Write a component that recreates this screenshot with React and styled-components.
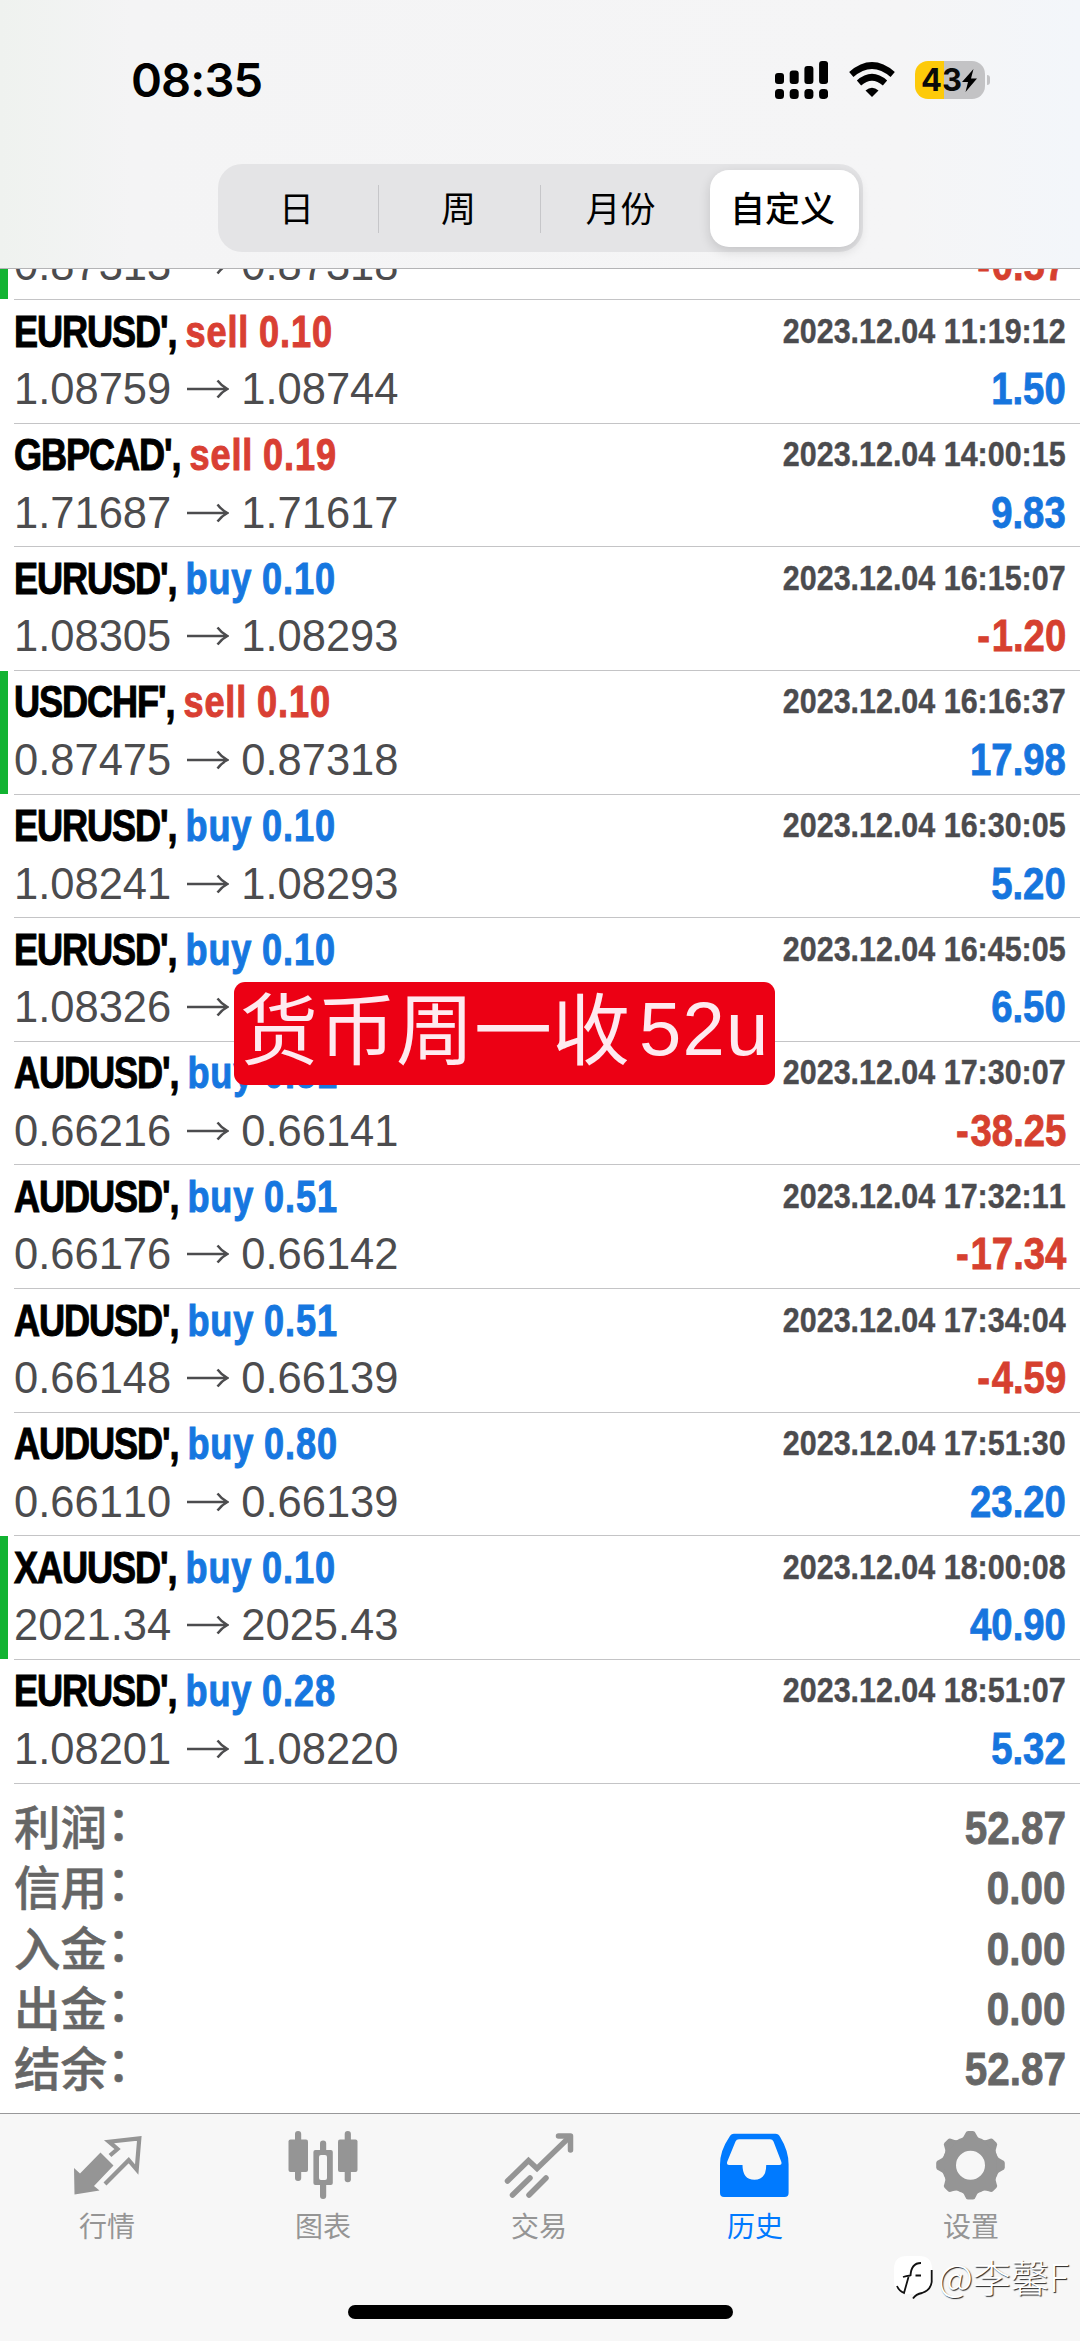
import React from 'react';
import styled, { createGlobalStyle } from 'styled-components';

const sans = '"Liberation Sans", "Noto Sans CJK SC", sans-serif';
const cjk = '"Noto Sans CJK SC", sans-serif';

const GlobalStyle = createGlobalStyle`
  * {
    box-sizing: border-box;
  }

  body {
    margin: 0;
    background: #fff;
    font-family: ${sans};
    font-kerning: none;
  }
`;

const Screen = styled.div`
  position: relative;
  display: flex;
  flex-direction: column;
  width: 1080px;
  height: 2341px;
  overflow: hidden;
  background: #fff;
`;

const Header = styled.header`
  flex: none;
  height: 269px;
  border-bottom: 1px solid #b4b4b6;
  background: linear-gradient(90deg, #eff2ef 0, #f4f4f5 130px, #f5f5f6 900px, #f3f6fa 100%);
`;

const StatusBar = styled.div`
  display: flex;
  justify-content: space-between;
  align-items: center;
  height: 164px;
  padding: 0 90px 4px 131px;
`;

const Clock = styled.span`
  font: 600 47px/50px Inter, sans-serif;
  letter-spacing: -0.9px;
  color: #000;
`;

const StatusIcons = styled.div`
  display: flex;
  align-items: center;
`;

const Signal = styled.svg`
  width: 53px;
  height: 38px;
  margin-right: 21px;
`;

const Wifi = styled.svg`
  width: 46px;
  height: 36px;
  margin-right: 20px;
`;

const Battery = styled.div`
  display: flex;
  align-items: center;
  justify-content: center;
  width: 70px;
  height: 38px;
  padding-right: 2px;
  border-radius: 13px;
  background: linear-gradient(90deg, #fdca0a 42%, #c3c3c5 42%);
  font: 700 31px/38px Inter, sans-serif;
  color: #0a0a0a;
`;

const Bolt = styled.svg`
  width: 15px;
  height: 23px;
`;

const BatteryCap = styled.i`
  width: 3px;
  height: 10px;
  margin-left: 2px;
  border-radius: 0 3px 3px 0;
  background: #c3c3c5;
`;

const Segments = styled.div`
  display: flex;
  width: 645px;
  height: 88px;
  margin: 0 auto;
  border-radius: 24px;
  background: #e4e4e6;
`;

const Segment = styled.button`
  display: flex;
  align-items: center;
  justify-content: center;
  flex: none;
  width: ${props => (props.$active ? 149 : 161)}px;
  margin: ${props => (props.$active ? '6px 4px 5px 7px' : '0')};
  padding: 0 3px 3px 0;
  border: 0;
  border-radius: 19px;
  background: ${props => (props.$active ? '#fff' : 'none')};
  box-shadow: ${props => (props.$active ? '0 4px 12px rgba(0, 0, 0, 0.14)' : 'none')};
  font: ${props => (props.$active ? 500 : 400)} 35px/50px ${cjk};
  white-space: nowrap;
  color: #000;
`;

const Divider = styled.i`
  width: 1px;
  height: 48px;
  margin: 21px 1px 0 -1px;
  background: #c6c6c9;
`;

const List = styled.main`
  display: flex;
  flex-direction: column;
  justify-content: flex-end;
  flex: none;
  height: 1514.5px;
  overflow: hidden;
`;

const Row = styled.div`
  position: relative;
  flex: none;
  display: grid;
  grid-template-columns: 1fr auto;
  grid-template-rows: 60px 1fr;
  height: 123.63px;
  padding: 0 14px;

  &::before {
    content: '';
    position: absolute;
    top: 0;
    bottom: 1px;
    left: 0;
    width: 8px;
    background: ${props => (props.$marked ? '#12b332' : 'none')};
  }

  &::after {
    content: '';
    position: absolute;
    right: 0;
    bottom: 0;
    left: 14px;
    height: 1px;
    background: #c4c4c6;
  }
`;

const Title = styled.div`
  justify-self: start;
  height: 50px;
  margin-top: 6.5px;
  font-size: 43.5px;
  line-height: 50px;
  font-weight: 700;
  white-space: nowrap;
  transform: scaleX(0.83);
  transform-origin: left;
  -webkit-text-stroke: 1px;
`;

const Ticker = styled.span`
  letter-spacing: -1.3px;
  color: #000;
`;

const Action = styled.span`
  letter-spacing: 1.1px;
  word-spacing: -1.5px;
  color: ${props => (props.$side === 'sell' ? '#d93f33' : '#1677e0')};
`;

const Time = styled.div`
  justify-self: end;
  height: 42px;
  margin-top: 9.5px;
  font-size: 35.5px;
  line-height: 42px;
  font-weight: 700;
  color: #4b4b4e;
  transform: scaleX(0.858);
  transform-origin: right;
  -webkit-text-stroke: 0.4px;
`;

const Prices = styled.div`
  grid-row: 2;
  display: flex;
  align-items: center;
  height: 50px;
  margin-top: 4px;
  font-size: 43.5px;
  line-height: 50px;
  color: #4c4c4e;
`;

const Arrow = styled.svg`
  width: 43px;
  height: 20px;
  margin: 0 12px 0 15px;
`;

const Amount = styled.div`
  grid-row: 2;
  justify-self: end;
  height: 50px;
  margin-top: 4px;
  font-size: ${props => (props.$total ? 46 : 43.5)}px;
  line-height: 50px;
  font-weight: 700;
  color: ${props => props.$color};
  transform: scaleX(0.88);
  transform-origin: right;
  -webkit-text-stroke: 0.8px;
`;

const Minus = styled.span`
  letter-spacing: 2px;
`;

const Summary = styled.section`
  flex: none;
  height: 329.5px;
  padding: 15.5px 14px 0;
`;

const SummaryLine = styled.div`
  display: flex;
  justify-content: space-between;
  height: 60.3px;
`;

const SummaryLabel = styled.span`
  margin-top: -4px;
  font: 500 46.5px/60px ${cjk};
  color: #666;
  -webkit-text-stroke: 0.5px;
`;

const Colon = styled.span`
  position: relative;
  top: -5px;
`;

const TabBar = styled.nav`
  display: flex;
  flex: 1;
  border-top: 1px solid #98989a;
  background: #f7f7f7;
`;

const Tab = styled.a`
  display: flex;
  flex-direction: column;
  align-items: center;
  width: 216px;
  padding-top: 15px;
  color: ${props => (props.$active ? '#007aff' : '#959595')};

  svg {
    width: 72px;
    height: 72px;
  }

  span {
    margin: 3px 2px 0 0;
    font: 400 28px/42px ${cjk};
  }
`;

const Banner = styled.div`
  position: absolute;
  top: 982px;
  left: 234px;
  display: flex;
  width: 541px;
  height: 103px;
  padding-left: 6px;
  border-radius: 11px;
  background: #ec0014;
  font: 400 78px/87px ${cjk};
  color: #feeaf0;
  white-space: nowrap;

  span {
    margin-left: 9px;
    font: 400 76px/93px ${sans};
    letter-spacing: 1.2px;
  }
`;

const HomeIndicator = styled.div`
  position: absolute;
  left: 348px;
  bottom: 22px;
  width: 385px;
  height: 14px;
  border-radius: 7px;
  background: #000;
`;

const Watermark = styled.div`
  position: absolute;
  right: 11px;
  bottom: 40px;
  display: flex;
  align-items: center;
  font: 300 38px/50px ${cjk};
  color: #fff;
  text-shadow: 1px 1px 1px #222;

  svg {
    width: 40px;
    height: 44px;
    margin: 4px 4px 0 0;
  }
`;

const segments = ['日', '周', '月份', '自定义'];

// the topmost deal is scrolled half under the header, only its price line shows
const deals = [
  { open: '0.87313', close: '0.87318', profit: '-0.57', marked: true },
  { symbol: 'EURUSD', side: 'sell', lots: '0.10', open: '1.08759', close: '1.08744', time: '2023.12.04 11:19:12', profit: '1.50' },
  { symbol: 'GBPCAD', side: 'sell', lots: '0.19', open: '1.71687', close: '1.71617', time: '2023.12.04 14:00:15', profit: '9.83' },
  { symbol: 'EURUSD', side: 'buy', lots: '0.10', open: '1.08305', close: '1.08293', time: '2023.12.04 16:15:07', profit: '-1.20' },
  { symbol: 'USDCHF', side: 'sell', lots: '0.10', open: '0.87475', close: '0.87318', time: '2023.12.04 16:16:37', profit: '17.98', marked: true },
  { symbol: 'EURUSD', side: 'buy', lots: '0.10', open: '1.08241', close: '1.08293', time: '2023.12.04 16:30:05', profit: '5.20' },
  { symbol: 'EURUSD', side: 'buy', lots: '0.10', open: '1.08326', close: '', time: '2023.12.04 16:45:05', profit: '6.50' },
  { symbol: 'AUDUSD', side: 'buy', lots: '0.51', open: '0.66216', close: '0.66141', time: '2023.12.04 17:30:07', profit: '-38.25' },
  { symbol: 'AUDUSD', side: 'buy', lots: '0.51', open: '0.66176', close: '0.66142', time: '2023.12.04 17:32:11', profit: '-17.34' },
  { symbol: 'AUDUSD', side: 'buy', lots: '0.51', open: '0.66148', close: '0.66139', time: '2023.12.04 17:34:04', profit: '-4.59' },
  { symbol: 'AUDUSD', side: 'buy', lots: '0.80', open: '0.66110', close: '0.66139', time: '2023.12.04 17:51:30', profit: '23.20' },
  { symbol: 'XAUUSD', side: 'buy', lots: '0.10', open: '2021.34', close: '2025.43', time: '2023.12.04 18:00:08', profit: '40.90', marked: true },
  { symbol: 'EURUSD', side: 'buy', lots: '0.28', open: '1.08201', close: '1.08220', time: '2023.12.04 18:51:07', profit: '5.32' },
];

const totals = [
  ['利润', '52.87'],
  ['信用', '0.00'],
  ['入金', '0.00'],
  ['出金', '0.00'],
  ['结余', '52.87'],
];

const QuotesIcon = () => (
  <svg viewBox="0 0 72 72">
    <path d="M2 39l6 5.5 20.5-21 13 13L22 57l5.500 4.500L2.500 65.500z" fill="currentColor" />
    <path
      d="M38 26.500l7.500-6.500-8.500-7.300 30.300-3.400-2.600 31.200-8-9.300L33 55"
      fill="none"
      stroke="currentColor"
      strokeWidth="4.200"
    />
  </svg>
);

const ChartIcon = () => (
  <svg viewBox="0 0 72 72" fill="currentColor">
    <rect x="0.500" y="10.500" width="19.500" height="32.500" rx="2" />
    <rect x="7" y="2" width="6.200" height="50" rx="3" />
    <rect x="50" y="10.500" width="19.500" height="32.500" rx="2" />
    <rect x="56.700" y="2" width="6.200" height="51.300" rx="3" />
    <rect x="32" y="11.500" width="6.200" height="14" rx="3" />
    <rect x="32" y="52" width="6.200" height="18" rx="3" />
    <path
      fillRule="evenodd"
      d="M27.400 21h15.400q2 0 2 2v31q0 2-2 2H27.400q-2 0-2-2V23q0-2 2-2zM33 26q-2 0-2 2v21q0 2 2 2h4q2 0 2-2V28q0-2-2-2z"
    />
  </svg>
);

const TradeIcon = () => (
  <svg viewBox="0 0 72 72" fill="none" stroke="currentColor" strokeWidth="5.500" strokeLinecap="round">
    <path d="M3.500 52l21-20.500 8.500 8L65 8.500M8.500 66L26 49M25 66l17-17" />
    <path d="M54.500 7h12V21" strokeLinejoin="round" />
  </svg>
);

const HistoryIcon = () => (
  <svg viewBox="0 0 72 72" fill="currentColor">
    <path
      fillRule="evenodd"
      d="M14 4.700h41.500q3 0 4.500 3 8.600 14 8.600 27.600V64q0 4-4 4H4q-4 0-4-4V35.300Q0 21.700 9.500 7.700q1.500-3 4.500-3zM19 10.300q-2.500 0-3.500 2.200L7.300 32.500q-1.200 3.500 1.700 3.500h13.500q0 14.700 11.900 14.700T46.200 36H59.500q2.900 0 1.700-3.500L53.500 12.500q-1-2.200-3.500-2.200z"
    />
  </svg>
);

const SettingsIcon = () => (
  <svg viewBox="0 0 72 72">
    <circle cx="34.500" cy="36.300" r="21.500" fill="none" stroke="currentColor" strokeWidth="14" />
    {[0, 45, 90, 135, 180, 225, 270, 315].map(angle => (
      <path
        key={angle}
        d="M25 10q2.500-1.500 4-5 1-3 3-3h5q2 0 3 3 1.500 3.500 4 5z"
        fill="currentColor"
        transform={`rotate(${angle} 34.5 36.3)`}
      />
    ))}
  </svg>
);

const tabs = [
  { label: '行情', Icon: QuotesIcon },
  { label: '图表', Icon: ChartIcon },
  { label: '交易', Icon: TradeIcon },
  { label: '历史', Icon: HistoryIcon, active: true },
  { label: '设置', Icon: SettingsIcon },
];

const Profit = ({ value }) => {
  const isLoss = value.startsWith('-');

  return (
    <Amount $color={isLoss ? '#d6402f' : '#1675de'}>
      {isLoss && <Minus>-</Minus>}
      {value.replace('-', '')}
    </Amount>
  );
};

const Deal = ({ symbol, side, lots, open, close, time, profit, marked }) => (
  <Row $marked={marked}>
    {symbol && (
      <>
        <Title>
          <Ticker>{symbol}&apos;, </Ticker>
          <Action $side={side}>{side} {lots}</Action>
        </Title>
        <Time>{time}</Time>
      </>
    )}
    <Prices>
      {open}
      <Arrow viewBox="0 0 43 20" fill="none" stroke="currentColor" strokeWidth="2.400">
        <path d="M1 10h40M31.500 1.500q4 5.500 10 8.500-6 3-10 8.500" />
      </Arrow>
      {close}
    </Prices>
    <Profit value={profit} />
  </Row>
);

const App = () => (
  <>
    <GlobalStyle />
    <Screen>
      <Header>
        <StatusBar>
          <Clock>08:35</Clock>
          <StatusIcons>
            <Signal viewBox="0 0 53 38">
              {[12, 9.5, 5, 0].map((top, i) => (
                <g key={top}>
                  <rect x={i * 14.7} y={top} width="9" height={23 - top} rx="3" />
                  <rect x={i * 14.7} y="28" width="9" height="10" rx="3.500" />
                </g>
              ))}
            </Signal>
            <Wifi viewBox="0 0 46 36" fill="none" stroke="#000" strokeWidth="6.500">
              <path d="M2.300 12.500q20.700-18 41.400 0M10 21q13-11.500 26 0" />
              <path d="M16.500 28.500q6.500-5.500 13 0L23 35z" fill="#000" stroke="none" />
            </Wifi>
            <Battery>
              43
              <Bolt viewBox="0 0 15 23">
                <path d="M11.500 0L0 13h6L3.500 23 15 9.500H9z" />
              </Bolt>
            </Battery>
            <BatteryCap />
          </StatusIcons>
        </StatusBar>
        <Segments>
          {segments.map((name, i) => (
            <React.Fragment key={name}>
              {(i === 1 || i === 2) && <Divider />}
              <Segment $active={i === 3}>{name}</Segment>
            </React.Fragment>
          ))}
        </Segments>
      </Header>

      <List>
        {deals.map(deal => (
          <Deal key={deal.time || 'partial'} {...deal} />
        ))}
      </List>

      <Summary>
        {totals.map(([label, value]) => (
          <SummaryLine key={label}>
            <SummaryLabel>{label}<Colon>：</Colon></SummaryLabel>
            <Amount $total $color="#666">{value}</Amount>
          </SummaryLine>
        ))}
      </Summary>

      <TabBar>
        {tabs.map(({ label, Icon, active }) => (
          <Tab key={label} $active={active}>
            <Icon />
            <span>{label}</span>
          </Tab>
        ))}
      </TabBar>

      <Banner>
        货币周一收<span>52u</span>
      </Banner>
      <HomeIndicator />
      <Watermark>
        <svg viewBox="0 0 40 44">
          <path d="M13 0h12q13 0 13 13v12q0 9-10 12-5 1-9 6l1-5h-7Q0 38 0 25V13Q0 0 13 0z" fill="#fff" />
          <path
            d="M27 7q-10 0-10.500 13M9 21q3-1 7.500-1.500M21.500 19.500H27M14.500 21L10 37q-5-2-7-7M37.700 14v12q-1 8-9.700 11-6 1-9 5.500"
            fill="none"
            stroke="#111"
            strokeWidth="1.800"
          />
        </svg>
        @李馨F
      </Watermark>
    </Screen>
  </>
);

export default App;
